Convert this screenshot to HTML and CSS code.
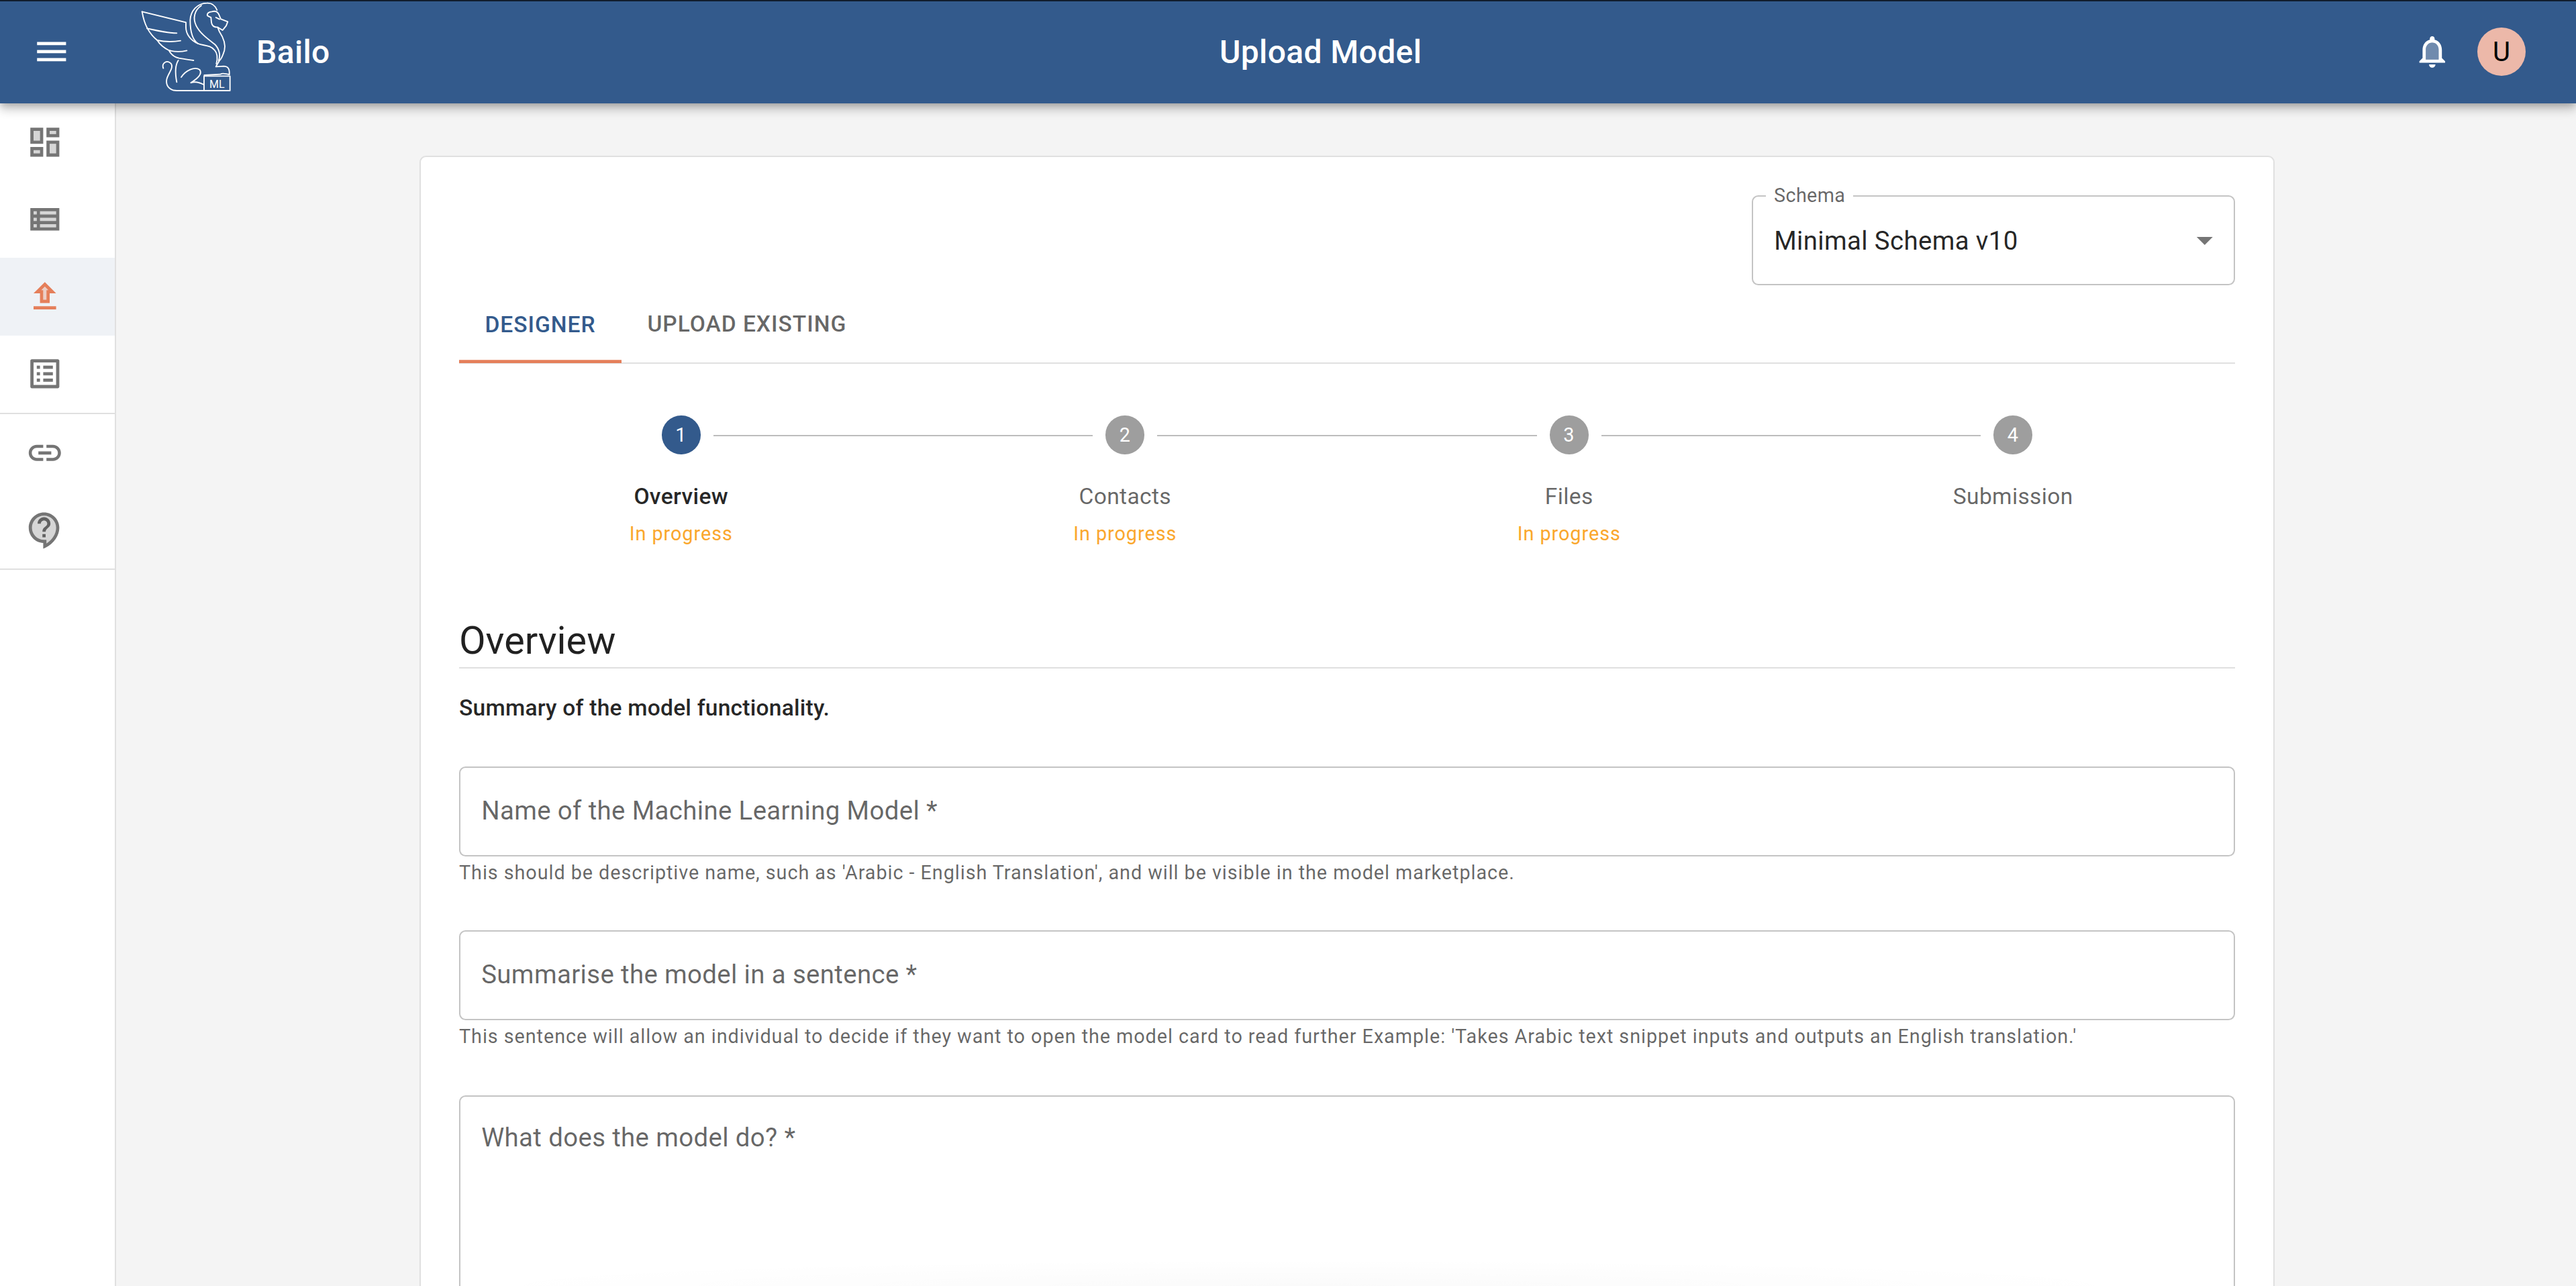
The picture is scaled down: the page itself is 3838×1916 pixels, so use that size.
FILE: index.html
```html
<!DOCTYPE html>
<html lang="en">
<head>
<meta charset="utf-8">
<title>Upload Model</title>
<link rel="stylesheet" href="styles.css">
</head>
<body>
<div class="app">
  <header class="appbar">
    <div class="brand">
      <svg class="icon menu-icon" viewBox="0 0 24 24"><path d="M3 18h18v-2H3v2zm0-5h18v-2H3v2zm0-7v2h18V6H3z"/></svg>
      <svg class="logo" viewBox="0 0 435 462">
        <g class="logo-lines">
          <path d="M20 52L216 100V122C216 150 235 180 270 195"/>
          <path d="M20 52C26 88 36 112 44 127C58 152 70 166 88 180C100 200 120 215 140 225C150 245 165 255 185 260C205 264 230 267 250 270"/>
          <path d="M42 127C80 135 130 148 175 148"/>
          <path d="M88 180C120 187 160 187 192 182"/>
          <path d="M140 225C165 232 195 232 220 226"/>
          <path d="M270 195C240 175 235 130 235 90C237 50 265 15 310 14C330 13 345 20 355 45"/>
          <path d="M285 25C255 45 245 80 262 115C278 148 315 175 345 198C365 218 372 248 362 272"/>
          <path d="M270 195C295 205 325 200 345 225C358 240 358 262 352 285"/>
          <path d="M332 52C320 52 309 60 312 70C318 75 325 75 328 78L330 100C332 116 345 122 358 122L380 135L396 115L403 97L372 85L362 62C355 50 345 48 332 52"/>
          <path d="M350 78L366 86"/>
          <path d="M358 122L365 140C385 170 395 195 388 225C382 245 378 260 365 272L350 298L385 296C405 296 412 310 410 332"/>
          <path d="M115 305C105 280 135 265 150 285C162 305 135 330 130 355C125 385 145 405 175 405H295"/>
          <path d="M182 270C165 295 168 330 175 367"/>
          <path d="M195 345C215 315 255 295 278 312C290 330 270 350 238 370C260 362 280 370 295 378"/>
          <path d="M298 336L370 332C380 325 390 330 410 333"/>
          <rect x="297" y="340" width="116" height="65"/>
        </g>
        <text class="logo-text" x="355" y="394">ML</text>
      </svg>
      <span class="brand-name">Bailo</span>
    </div>
    <div class="page-title">Upload Model</div>
    <div class="actions">
      <svg class="icon bell-icon" viewBox="0 0 24 24"><path opacity=".3" d="M12 6.5c-2.49 0-4 2.02-4 4.5v6h8v-6c0-2.48-1.51-4.5-4-4.5z"/><path d="M12 22c1.1 0 2-.9 2-2h-4c0 1.1.9 2 2 2zm6-6v-5c0-3.07-1.63-5.64-4.5-6.32V4c0-.83-.67-1.5-1.5-1.5s-1.5.67-1.5 1.5v.68C7.64 5.36 6 7.92 6 11v5l-2 2v1h16v-1l-2-2zm-2 1H8v-6c0-2.48 1.51-4.5 4-4.5s4 2.02 4 4.5v6z"/></svg>
      <div class="avatar">U</div>
    </div>
  </header>

  <div class="body-row">
    <nav class="sidebar">
      <div class="nav-group">
        <div class="nav-item"><svg class="icon" viewBox="0 0 24 24"><path opacity=".3" d="M5 5h4v6H5zm10 8h4v6h-4zM5 17h4v2H5zM15 5h4v2h-4z"/><path d="M3 13h8V3H3v10zm2-8h4v6H5V5zm8 16h8V11h-8v10zm2-8h4v6h-4v-6zM13 3v6h8V3h-8zm6 4h-4V5h4v2zM3 21h8v-6H3v6zm2-4h4v2H5v-2z"/></svg></div>
        <div class="nav-item"><svg class="icon" viewBox="0 0 24 24"><path opacity=".3" d="M5 11h2v2H5zm0 4h2v2H5zm0-8h2v2H5zm4 0h10v2H9zm0 8h10v2H9zm0-4h10v2H9z"/><path d="M3 5v14h18V5H3zm4 12H5v-2h2v2zm0-4H5v-2h2v2zm0-4H5V7h2v2zm12 8H9v-2h10v2zm0-4H9v-2h10v2zm0-4H9V7h10v2z"/></svg></div>
        <div class="nav-item nav-item-active"><svg class="icon" viewBox="0 0 24 24"><path opacity=".3" d="M9.83 8H11v6h2V8h1.17L12 5.83z"/><path d="M5 18h14v2H5zm0-8h4v6h6v-6h4l-7-7-7 7zm8-2v6h-2V8H9.83L12 5.83 14.17 8H13z"/></svg></div>
        <div class="nav-item"><svg class="icon" viewBox="0 0 24 24"><path d="M19 5v14H5V5h14m1.1-2H3.9c-.5 0-.9.4-.9.9v16.2c0 .4.4.9.9.9h16.2c.4 0 .9-.5.9-.9V3.9c0-.5-.5-.9-.9-.9zM11 7h6v2h-6V7zm0 4h6v2h-6v-2zm0 4h6v2h-6zM7 7h2v2H7zm0 4h2v2H7zm0 4h2v2H7z"/></svg></div>
      </div>
      <div class="nav-group">
        <div class="nav-item"><svg class="icon" viewBox="0 0 24 24"><path d="M3.9 12c0-1.71 1.39-3.1 3.1-3.1h4V7H7c-2.76 0-5 2.24-5 5s2.24 5 5 5h4v-1.9H7c-1.71 0-3.1-1.39-3.1-3.1zM8 13h8v-2H8v2zm9-6h-4v1.9h4c1.71 0 3.1 1.39 3.1 3.1s-1.39 3.1-3.1 3.1h-4V17h4c2.76 0 5-2.24 5-5s-2.24-5-5-5z"/></svg></div>
        <div class="nav-item"><svg class="icon" viewBox="0 0 24 24"><path opacity=".3" d="M11.5 3C7.36 3 4 6.36 4 10.5S7.36 18 11.5 18H13v2.3c3.62-2.3 6-6.08 6-9.8C19 6.36 15.64 3 11.5 3z"/><path d="M11 23.59v-3.6c-5.01-.26-9-4.42-9-9.49C2 5.26 6.26 1 11.5 1S21 5.26 21 10.5c0 4.95-3.44 9.93-8.57 12.4l-1.43.69zM11.5 3C7.36 3 4 6.36 4 10.5S7.36 18 11.5 18H13v2.3c3.62-2.3 6-6.08 6-9.8C19 6.36 15.64 3 11.5 3zm-1 11.5h2v2h-2zm2-1.5h-2c0-3.25 3-3 3-5 0-1.1-.9-2-2-2s-2 .9-2 2h-2c0-2.21 1.79-4 4-4s4 1.79 4 4c0 2.5-3 2.75-3 5z"/></svg></div>
      </div>
    </nav>

    <main class="main">
      <section class="card">
        <div class="schema-row">
          <div class="field schema-field">
            <span class="schema-label">Schema</span>
            <span class="schema-value">Minimal Schema v10</span>
            <svg class="icon caret" viewBox="0 0 24 24"><path d="M7 10l5 5 5-5z"/></svg>
          </div>
        </div>

        <div class="tabs">
          <div class="tab tab-active">Designer</div>
          <div class="tab">Upload Existing</div>
        </div>

        <div class="stepper">
          <div class="track">
            <div class="dot dot-active">1</div>
            <div class="connector"></div>
            <div class="dot">2</div>
            <div class="connector"></div>
            <div class="dot">3</div>
            <div class="connector"></div>
            <div class="dot">4</div>
          </div>
          <div class="step-labels">
            <div class="step-label"><div class="step-name step-name-active">Overview</div><div class="step-state">In progress</div></div>
            <div class="step-label"><div class="step-name">Contacts</div><div class="step-state">In progress</div></div>
            <div class="step-label"><div class="step-name">Files</div><div class="step-state">In progress</div></div>
            <div class="step-label"><div class="step-name">Submission</div></div>
          </div>
        </div>

        <h2 class="section-title">Overview</h2>
        <p class="section-desc">Summary of the model functionality.</p>

        <div class="field field-first"><span class="field-label">Name of the Machine Learning Model *</span></div>
        <p class="helper">This should be descriptive name, such as 'Arabic - English Translation', and will be visible in the model marketplace.</p>

        <div class="field field-next"><span class="field-label">Summarise the model in a sentence *</span></div>
        <p class="helper">This sentence will allow an individual to decide if they want to open the model card to read further Example: 'Takes Arabic text snippet inputs and outputs an English translation.'</p>

        <div class="field field-area"><span class="field-label">What does the model do? *</span></div>
      </section>
    </main>
  </div>
  <div class="bottom-fade"></div>
</div>
</body>
</html>
```

FILE: styles.css
```css
* { box-sizing: border-box; }
html, body { margin: 0; height: 100%; }
body { font-family: Roboto, "Liberation Sans", sans-serif; color: rgba(0,0,0,.87); background: #f4f4f4; }

.app { position: relative; width: 3838px; height: 1916px; overflow: hidden; display: flex; flex-direction: column; }

.icon { width: 57.6px; height: 57.6px; fill: rgba(0,0,0,.54); flex: none; display: block; }

/* App bar */
.appbar {
  position: relative; z-index: 2; flex: none; height: 154px; display: flex; align-items: center;
  background: #335a8c; color: #fff; border-top: 2px solid #111c2c;
  box-shadow: 0 4.8px 9.6px -2.4px rgba(0,0,0,.2), 0 9.6px 12px 0 rgba(0,0,0,.14), 0 2.4px 24px 0 rgba(0,0,0,.12);
}
.brand { width: 1817px; flex: none; display: flex; align-items: center; padding-left: 48px; margin-top: -2px; }
.menu-icon { fill: #fff; }
.logo { width: 145px; height: 154px; margin-left: 99.4px; flex: none; }
.logo-lines { fill: none; stroke: #fff; stroke-width: 5.6; stroke-linecap: round; stroke-linejoin: round; }
.logo-text { fill: #fff; font-family: Roboto, sans-serif; font-size: 48px; font-weight: 400; text-anchor: middle; }
.brand-name { margin-left: 32px; font-size: 48px; font-weight: 500; letter-spacing: .36px; }
.page-title { font-size: 48px; font-weight: 500; letter-spacing: .36px; margin-top: -2px; white-space: nowrap; }
.actions { margin-left: auto; margin-top: -2px; display: flex; align-items: center; gap: 38.4px; padding-right: 75px; }
.bell-icon { fill: #fff; }
.avatar { width: 72px; height: 72px; border-radius: 50%; background: #ecb8a9; color: #000; display: flex; align-items: center; justify-content: center; font-size: 40px; }

/* Shell */
.body-row { flex: 1; min-height: 0; display: flex; }
.sidebar { flex: none; width: 173px; background: #fff; border-right: 2px solid #e0e0e0; }
.nav-group { border-bottom: 2.4px solid #e0e0e0; }
.nav-item { height: 115.2px; padding-left: 38.4px; display: flex; align-items: center; }
.nav-item-active { background: rgba(51,90,140,.08); }
.nav-item-active .icon { fill: #e57f5a; }
.main { flex: 1; min-width: 0; padding: 78px 0 0 452px; }

/* Card */
.card { width: 2764px; height: 1800px; background: #fff; border: 2px solid #e0e0e0; border-radius: 9.6px; padding: 57px 57px 0; }

.field { border: 2.4px solid #c4c4c4; border-radius: 9.6px; height: 134px; display: flex; align-items: center; padding: 0 31.2px; position: relative; }
.field-label { font-size: 38.4px; color: rgba(0,0,0,.6); letter-spacing: .36px; margin-top: -3px; }
.field-first { margin-top: 63px; }
.field-next { margin-top: 66px; }
.field-area { margin-top: 68px; height: 500px; align-items: flex-start; padding-top: 41px; }

.schema-row { display: flex; justify-content: flex-end; }
.schema-field { width: 720px; padding-right: 14px; }
.schema-label { position: absolute; left: 19px; top: -22px; padding: 0 12px; background: #fff; font-size: 28.8px; line-height: 40px; color: rgba(0,0,0,.6); letter-spacing: .36px; }
.schema-value { font-size: 38.4px; letter-spacing: .36px; }
.caret { margin-left: auto; }

/* Tabs */
.tabs { height: 116.6px; display: flex; border-bottom: 2.4px solid #e0e0e0; }
.tab { height: 114.2px; padding: 0 38.4px; display: flex; align-items: center; font-size: 33.6px; font-weight: 500; letter-spacing: .96px; text-transform: uppercase; color: rgba(0,0,0,.6); }
.tab-active { color: #335a8c; box-shadow: inset 0 -4.8px 0 #e57f5a; height: 116px; }

/* Stepper */
.stepper { margin-top: 77.4px; }
.track { display: flex; align-items: center; padding: 0 302px; }
.dot { width: 57.6px; height: 57.6px; flex: none; border-radius: 50%; background: #9e9e9e; color: #fff; display: flex; align-items: center; justify-content: center; font-size: 28.8px; letter-spacing: .96px; }
.dot-active { background: #335a8c; }
.connector { flex: 1; height: 2.4px; margin: 2px 19.2px 0; background: #bdbdbd; }
.step-labels { display: grid; grid-template-columns: repeat(4, 1fr); margin-top: 39.4px; text-align: center; }
.step-name { font-size: 33.6px; line-height: 48px; color: rgba(0,0,0,.6); letter-spacing: .36px; }
.step-name-active { color: rgba(0,0,0,.87); font-weight: 500; }
.step-state { margin-top: 7px; font-size: 28.8px; line-height: 48px; color: #faa72d; letter-spacing: .96px; }

/* Form section */
.section-title { margin: 97.6px 0 0; font-size: 57.6px; font-weight: 400; line-height: 76.8px; border-bottom: 2.4px solid #e0e0e0; height: 79.8px; }
.section-desc { margin: 34.6px 0 0; font-size: 33.6px; line-height: 48px; font-weight: 500; letter-spacing: .22px; color: rgba(0,0,0,.87); }
.helper { margin: 4px 0 0; font-size: 28.8px; line-height: 40px; letter-spacing: .935px; color: rgba(0,0,0,.6); }

.bottom-fade { position: absolute; left: 0; right: 0; bottom: 0; height: 40px; pointer-events: none; background: radial-gradient(ellipse 1300px 40px at 1950px 100%, rgba(0,0,0,.02), rgba(0,0,0,0)); }
```
